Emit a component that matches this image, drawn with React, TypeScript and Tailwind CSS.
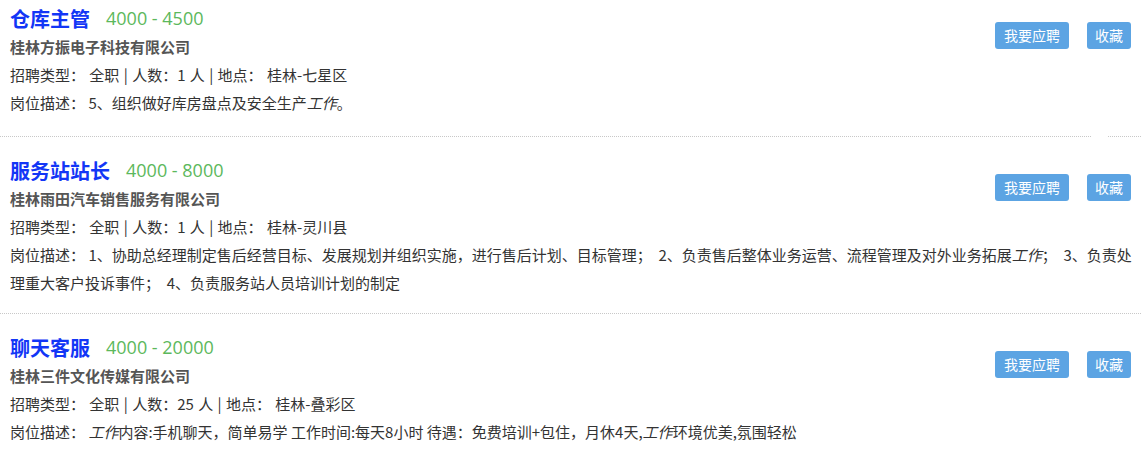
import React from "react";

const FONT = { fontFamily: '"Noto Sans CJK SC", "Noto Sans", sans-serif' };

function Em({ children }: { children: React.ReactNode }) {
  return <em className="italic">{children}</em>;
}

type Job = {
  title: string;
  salary: string;
  company: string;
  count: string;
  place: string;
  desc: React.ReactNode;
  cls: string;
  gap?: boolean;
};

const jobs: Job[] = [
  {
    title: "仓库主管",
    salary: "4000 - 4500",
    company: "桂林方振电子科技有限公司",
    count: "1",
    place: "桂林-七星区",
    desc: (
      <>
        5、组织做好库房盘点及安全生产<Em>工作</Em>。
      </>
    ),
    cls: "pt-[4px] pb-[19px]",
    gap: true,
  },
  {
    title: "服务站站长",
    salary: "4000 - 8000",
    company: "桂林雨田汽车销售服务有限公司",
    count: "1",
    place: "桂林-灵川县",
    desc: (
      <>
        1、协助总经理制定售后经营目标、发展规划并组织实施，进行售后计划、目标管理；&nbsp;
        2、负责售后整体业务运营、流程管理及对外业务拓展<Em>工作</Em>；&nbsp;
        3、负责处理重大客户投诉事件；&nbsp; 4、负责服务站人员培训计划的制定
      </>
    ),
    cls: "pt-[19px] pb-[16px]",
  },
  {
    title: "聊天客服",
    salary: "4000 - 20000",
    company: "桂林三件文化传媒有限公司",
    count: "25",
    place: "桂林-叠彩区",
    desc: (
      <>
        <Em>工作</Em>内容:手机聊天，简单易学 工作时间:每天8小时 待遇：免费培训+包住，月休4天,
        <Em>工作</Em>环境优美,氛围轻松
      </>
    ),
    cls: "pt-[19px] pb-[17px]",
  },
];

export default function App() {
  return (
    <div className="w-[1141px] h-[461px] overflow-hidden bg-white text-[#333]" style={FONT}>
      {jobs.map((j, i) => (
        <div
          key={i}
          className={`relative pl-[10px] pr-[8px] ${j.cls} ${
            i < 2 ? "border-b border-dotted border-[#c8c8c8]" : ""
          }`}
        >
          <div className="float-right mt-[18px] mr-[2px] flex gap-[18px]">
            <button className="h-[27px] w-[74px] rounded-[3px] bg-[#5ca4e3] text-[14px] leading-[27px] text-white">
              我要应聘
            </button>
            <button className="h-[27px] w-[44px] rounded-[3px] bg-[#5ca4e3] text-[14px] leading-[27px] text-white">
              收藏
            </button>
          </div>
          <div className="flex h-[29px] items-center">
            <span className="text-[20px] font-bold text-[#1236f6]">{j.title}</span>
            <span
              className="ml-[16px] text-[18px] text-[#5cb85c]"
              style={{ fontFamily: '"Open Sans", "Noto Sans", sans-serif' }}
            >
              {j.salary}
            </span>
          </div>
          <div className="text-[15px] leading-[28px] font-bold text-[#555]">{j.company}</div>
          <div className="text-[15px] leading-[28px] [word-spacing:1px]">
            招聘类型：&nbsp;全职 | 人数：{j.count} 人 | 地点：&nbsp;{j.place}
          </div>
          <div className="text-[15px] leading-[28px]">岗位描述：&nbsp;{j.desc}</div>
          {j.gap && (
            <div className="absolute bottom-[-1px] right-[34px] h-[2px] w-[15px] bg-white" />
          )}
        </div>
      ))}
    </div>
  );
}
